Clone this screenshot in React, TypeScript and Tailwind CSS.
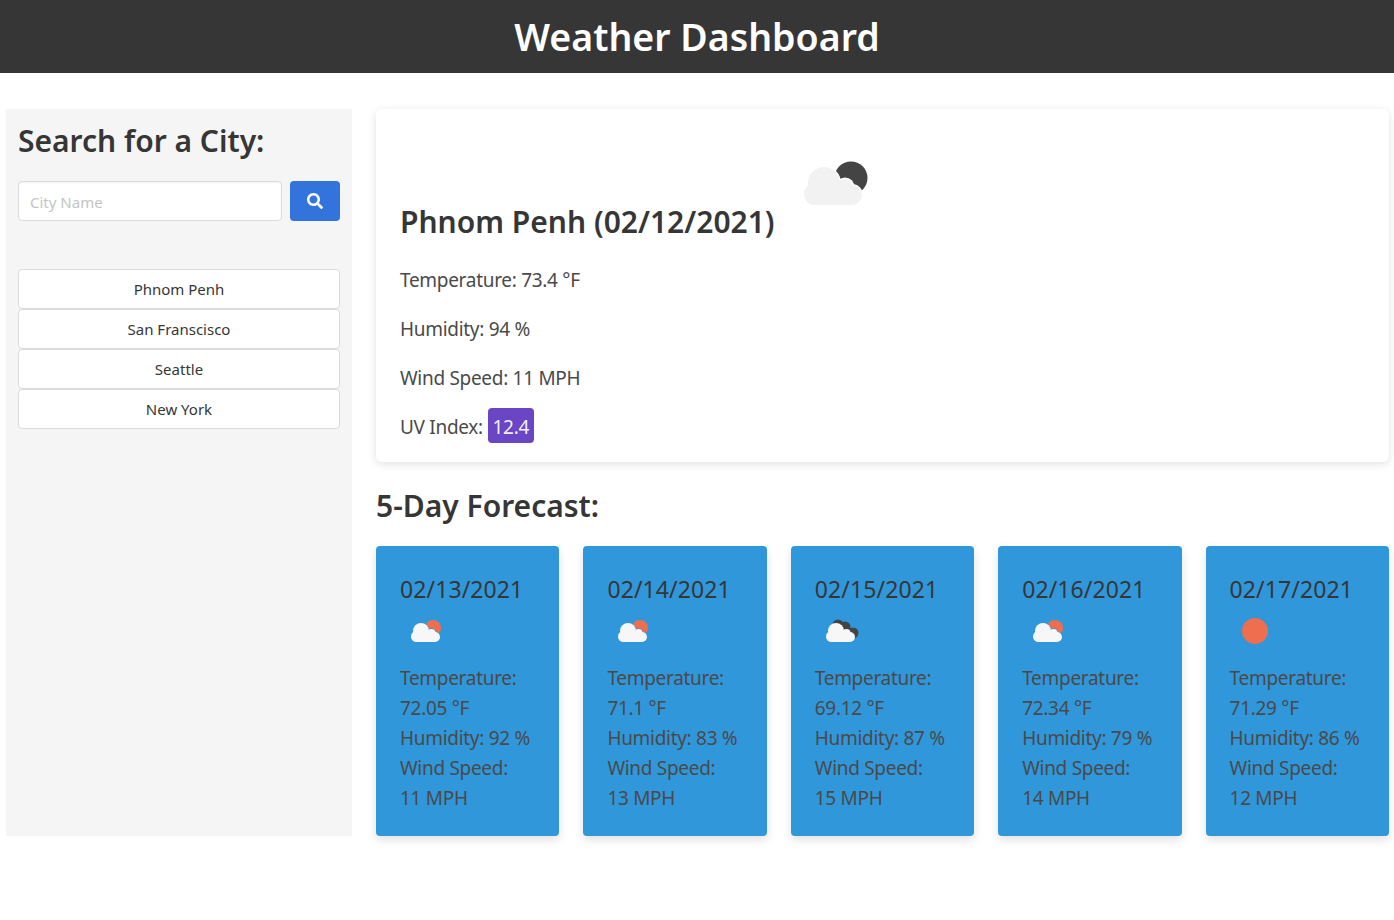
import React from "react";
import { FaSearch } from "react-icons/fa";

function WeatherIcon({ kind, size }: { kind: "moon" | "sun" | "clouds" | "clear"; size: number }) {
  const cloud = kind === "moon" ? "#f2f2f2" : "#f7f7f7";
  const halo = kind === "moon" ? "#ffffff" : "#3097db";
  return (
    <svg width={size} height={size} viewBox="0 0 100 100" className="inline-block align-baseline">
      {kind === "moon" && <circle cx="69" cy="45" r="16.5" fill="#444444" />}
      {kind === "sun" && <circle cx="66" cy="44" r="16" fill="#ee6e4d" />}
      {kind === "clear" && <circle cx="50" cy="50" r="26" fill="#ee6e4d" />}
      {kind === "clouds" && (
        <g fill="#444444">
          <circle cx="46" cy="38" r="11" />
          <circle cx="60" cy="42" r="11" />
          <circle cx="76" cy="54" r="11" />
          <rect x="48" y="44" width="26" height="20" />
        </g>
      )}
      {kind !== "clear" && (
        <>
          {kind !== "clouds" && (
            <g fill={halo}>
              <circle cx="42" cy="50" r="17" />
              <circle cx="63" cy="54" r="9.5" />
              <circle cx="70" cy="62" r="11" />
            </g>
          )}
          <g fill={cloud}>
            <circle cx="33" cy="61" r="11" />
            <circle cx="42" cy="50" r="16" />
            <circle cx="63" cy="54" r="8" />
            <circle cx="70" cy="62" r="10" />
            <rect x="33" y="56" width="37" height="16" />
          </g>
        </>
      )}
    </svg>
  );
}

const cities = ["Phnom Penh", "San Franscisco", "Seattle", "New York"];

const forecast = [
  { date: "02/13/2021", icon: "sun", temp: "72.05", hum: "92", wind: "11" },
  { date: "02/14/2021", icon: "sun", temp: "71.1", hum: "83", wind: "13" },
  { date: "02/15/2021", icon: "clouds", temp: "69.12", hum: "87", wind: "15" },
  { date: "02/16/2021", icon: "sun", temp: "72.34", hum: "79", wind: "14" },
  { date: "02/17/2021", icon: "clear", temp: "71.29", hum: "86", wind: "12" },
] as const;

export default function App() {
  return (
    <div className="min-h-[920px] bg-white text-[#4a4a4a] font-['Noto_Sans',sans-serif]">
      <header className="h-[73px] bg-[#363636] flex items-center justify-center">
        <h1 className="text-[37.5px] leading-[73px] font-semibold text-white">Weather Dashboard</h1>
      </header>
      <main className="flex gap-6 pt-9 pl-[6px] pr-[5px]">
        <aside className="w-[346px] h-[727px] bg-[#f5f5f5] p-3 shrink-0">
          <h2 className="text-[30px] leading-[40px] font-semibold text-[#363636] mb-5">Search for a City:</h2>
          <div className="flex gap-2">
            <input
              placeholder="City Name"
              className="flex-1 min-w-0 h-10 rounded border border-[#dbdbdb] bg-white px-[11px] pt-[1px] text-[15px] placeholder:text-[#c4c4c4] shadow-[inset_0_1px_2px_rgba(10,10,10,0.05)]"
            />
            <button className="w-[50px] h-10 rounded bg-[#3273dc] text-white flex items-center justify-center">
              <FaSearch className="w-4 h-4" />
            </button>
          </div>
          <div className="mt-12 flex flex-col">
            {cities.map((c) => (
              <button key={c} className="h-10 rounded border border-[#dbdbdb] bg-white text-[15px] text-[#363636]">
                {c}
              </button>
            ))}
          </div>
        </aside>
        <section className="flex-1 min-w-0">
          <div className="h-[353px] rounded-md bg-white p-6 shadow-[0_2px_8px_rgba(10,10,10,0.12)]">
            <h2 className="h-[107px] text-[30px] leading-[40px] font-semibold text-[#363636] whitespace-nowrap">
              Phnom Penh (02/12/2021) <WeatherIcon kind="moon" size={100} />
            </h2>
            <div className="mt-[25px] text-[19px] tracking-[-0.3px] leading-[30px] flex flex-col gap-[19px]">
              <p>Temperature: 73.4 °F</p>
              <p>Humidity: 94 %</p>
              <p>Wind Speed: 11 MPH</p>
              <p>
                UV Index:{" "}
                <span className="rounded bg-[#6a45c4] px-[5px] pt-[6px] pb-[3px] text-[#f2eefc]">12.4</span>
              </p>
            </div>
          </div>
          <h2 className="mt-6 mb-5 text-[30px] leading-10 font-semibold text-[#363636]">5-Day Forecast:</h2>
          <div className="grid grid-cols-5 gap-6">
            {forecast.map((d) => (
              <div key={d.date} className="h-[290px] rounded bg-[#3097db] p-6 shadow-[0_4px_10px_rgba(10,10,10,0.12)]">
                <p className="text-[23px] tracking-[0.1px] leading-[38px] text-[#363636] whitespace-nowrap">{d.date}</p>
                <div className="h-[50px] -mt-[2px] mb-[7px]">
                  <WeatherIcon kind={d.icon} size={50} />
                </div>
                <div className="text-[19px] tracking-[-0.3px] leading-[30px]">
                  <p>Temperature:</p>
                  <p>{d.temp} °F</p>
                  <p>Humidity: {d.hum} %</p>
                  <p>Wind Speed:</p>
                  <p>{d.wind} MPH</p>
                </div>
              </div>
            ))}
          </div>
        </section>
      </main>
    </div>
  );
}
